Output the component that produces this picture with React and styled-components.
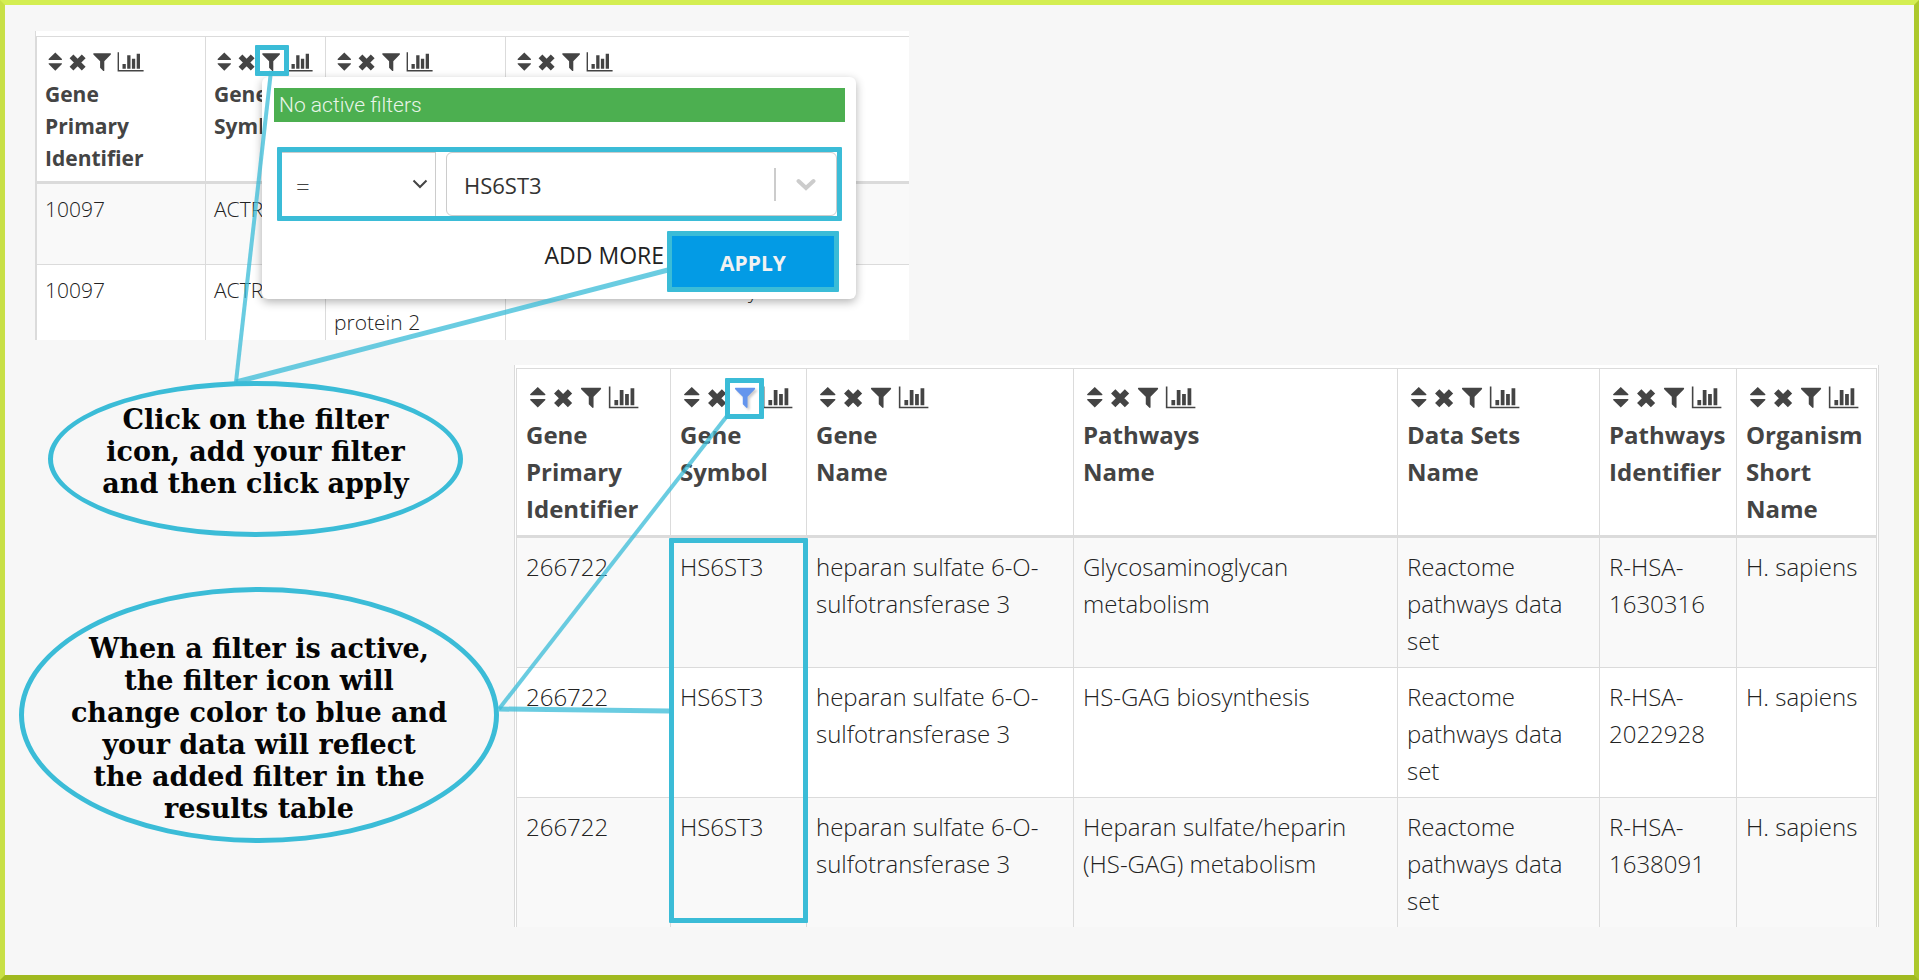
import React from "react";
import styled, { createGlobalStyle, css } from "styled-components";

const CYAN = "#3bbcd7";
const LINE = "#dbdbdb";

const GlobalStyle = createGlobalStyle`
  * { box-sizing: border-box; }
  body {
    margin: 0;
    background: #f7f7f7;
    font-family: "Open Sans", "Noto Sans", sans-serif;
    color: #222;
  }
`;

const Frame = styled.main`
  position: relative;
  min-height: 100vh;
  border: 5px solid;
  border-color: #d4ee52 #acc82c #a0b91f #c8e046;
  padding: 26px 35px 48px 14px;
`;

const Panel = styled.section`
  position: relative;
  background: #fff;
  border-left: 1px solid ${LINE};
`;

const EditorPanel = styled(Panel)`
  max-width: 874px;
  height: 309px;
  margin-left: 16px;
  padding-top: 5px;
  overflow: hidden;
`;

const ResultPanel = styled(Panel)`
  flex: 1;
  border-right: 1px solid ${LINE};
  padding: 3px 1px 0;
`;

const LowerRow = styled.div`
  display: flex;
  align-items: flex-start;
  gap: 15px;
  margin-top: 25px;
`;

const Notes = styled.div`
  flex: none;
  display: flex;
  flex-direction: column;
  width: 480px;
  padding-top: 16px;
  gap: 50px;
`;

const Note = styled.p`
  margin: 0;
  border: 5px solid ${CYAN};
  border-radius: 50%;
  text-align: center;
  color: #050505;
  font: bold 27px/32px "DejaVu Serif", serif;
  ${(p) =>
    p.$large
      ? css`height: 256px; padding-top: 41px;`
      : css`width: 415px; height: 156px; margin-left: 29px; padding-top: 18px;`}
`;

const Table = styled.table`
  width: 100%;
  table-layout: fixed;
  border-collapse: separate;
  border-spacing: 0;
  border-left: 1px solid ${LINE};
  border-top: 1px solid ${LINE};
  font-size: ${(p) => (p.$large ? 24 : 21)}px;
  line-height: ${(p) => (p.$large ? 37 : 32)}px;

  th,
  td {
    border-right: 1px solid ${LINE};
    text-align: left;
    vertical-align: top;
  }
  th {
    padding: ${(p) => (p.$large ? "9px 9px 8px" : "8px 8px 7px")};
  }
  td {
    padding: ${(p) => (p.$large ? "10px 9px 8px" : "9px 8px 7px")};
  }
  ${(p) =>
    !p.$large &&
    css`
      th:last-child,
      td:last-child { border-right: 0; }
    `}
`;

const Col = styled.col`
  width: ${(p) => (p.$w ? p.$w + "px" : "auto")};
`;

const HeadCell = styled.th`
  border-bottom: 3px solid ${LINE};
  color: #444;
  font-weight: 700;
`;

const HeadLine = styled.span`
  display: block;
`;

const Row = styled.tr`
  background: ${(p) => (p.$striped ? "#f9f9f9" : "#fff")};
`;

const Cell = styled.td`
  font-weight: 300;
  border-bottom: ${(p) => (p.$last ? 0 : 1)}px solid ${LINE};
`;

const Tools = styled.span`
  display: flex;
  height: ${(p) => (p.$large ? 37 : 32)}px;
  margin-bottom: 1px;
`;

const Tool = styled.button`
  position: relative;
  flex: none;
  display: flex;
  align-items: center;
  padding: 0;
  border: 0;
  background: none;
  color: ${(p) => (p.$active ? "#6495ed" : "#444")};

  svg {
    display: block;
    width: ${(p) => p.$w}px;
    height: ${(p) => (p.$large ? 25 : 22)}px;
    fill: currentColor;
    filter: ${(p) => (p.$active ? "drop-shadow(2px 2px 1px rgba(0,0,0,.2))" : "none")};
  }

  ${(p) =>
    p.$ringed &&
    css`
      z-index: 1;
      &::after {
        content: "";
        position: absolute;
        inset: ${p.$large ? "0 -3px -4px -5px" : "0 -4px 1px -3px"};
        border: 5px solid ${CYAN};
        border-radius: 1px;
      }
    `}
`;

const ColumnRing = styled.div`
  position: absolute;
  left: 154px;
  top: 173px;
  width: 139px;
  height: 385px;
  border: 5px solid ${CYAN};
  border-radius: 1px;
  pointer-events: none;
`;

const Popup = styled.form`
  position: absolute;
  left: 226px;
  top: 46px;
  width: 594px;
  padding: 11px 11px 7px 12px;
  border-radius: 6px;
  background: #fff;
  box-shadow: 0 3px 10px rgba(0, 0, 0, 0.3);
`;

const Status = styled.p`
  margin: 0 0 25px;
  padding-left: 5px;
  background: #4caf50;
  color: #e9f5e9;
  font: 300 21px/34px Roboto, sans-serif;
`;

const FilterBox = styled.div`
  display: flex;
  gap: 10px;
  height: 74px;
  margin: 0 3px;
  border: 5px solid ${CYAN};
  border-radius: 1px;
`;

const Operator = styled.label`
  position: relative;
  width: 154px;
  border-top: 1px solid #ccc;
  border-right: 1px solid #ccc;

  select {
    appearance: none;
    width: 100%;
    height: 100%;
    padding: 4px 0 0 14px;
    border: 0;
    background: transparent;
    color: #444;
    font: 300 24px "Open Sans", sans-serif;
  }
  svg {
    position: absolute;
    right: 7px;
    top: 26px;
    pointer-events: none;
  }
`;

const ValueField = styled.label`
  flex: 1;
  display: flex;
  align-items: center;
  border: 1px solid #ccc;
  border-radius: 6px;

  input {
    flex: 1;
    min-width: 0;
    padding: 2px 0 0 17px;
    border: 0;
    outline: 0;
    background: transparent;
    color: #333;
    font: 400 22px "Open Sans", sans-serif;
  }
  svg {
    margin: 0 20px;
  }
`;

const Divider = styled.span`
  width: 2px;
  height: 33px;
  background: #ccc;
`;

const Actions = styled.div`
  display: flex;
  justify-content: flex-end;
  margin: 10px 6px 0 0;
`;

const AddMore = styled.button`
  height: 48px;
  padding: 0 3px;
  border: 0;
  background: none;
  color: #222;
  font: 400 23px "Open Sans", sans-serif;
`;

const Apply = styled.button`
  width: 172px;
  height: 61px;
  border: 5px solid ${CYAN};
  border-radius: 1px;
  padding: 2px 0 0;
  background: #039be5;
  color: #f2f2f2;
  font: 700 21px "Open Sans", sans-serif;
`;

const Connectors = styled.svg`
  position: absolute;
  left: 0;
  top: 0;
  width: 800px;
  height: 800px;
  pointer-events: none;
  stroke: ${CYAN};
  stroke-opacity: 0.76;
`;

const ICONS = [
  {
    label: "Sort column",
    w: 21,
    wl: 24,
    art: (
      <path d="M10.3 2.6L17 9Q17.3 9.9 16.4 9.9H4.2Q3.3 9.9 3.6 9ZM3.6 14Q3.3 13.2 4.2 13.2H16.4Q17.3 13.2 17 14L10.3 20.7Z" />
    ),
  },
  {
    label: "Remove column",
    w: 23,
    wl: 26,
    art: (
      <path
        d="M5.5 6.4L17.7 18.6M17.7 6.4L5.5 18.6"
        stroke="currentColor"
        strokeWidth="5.4"
      />
    ),
  },
  {
    label: "Filter column",
    w: 27,
    wl: 31,
    art: (
      <path d="M4.6 3.3H21.6Q22.5 3.8 21.6 4.8L15.3 11.2V20.4Q15.1 21.3 14.3 20.9L11.1 17.8V11.2L4.6 4.8Q3.7 3.8 4.6 3.3Z" />
    ),
  },
  {
    label: "Column summary",
    w: 29,
    wl: 33,
    art: (
      <path d="M1.6 2.2H3V20H27.6V21.4H1.6ZM6.5 14H9.8V18.7H6.5ZM11.2 5.3H14.5V18.7H11.2ZM15.9 8.8H19.2V18.7H15.9ZM20.7 3.7H24V18.7H20.7Z" />
    ),
  },
];

function ColumnTools({ large, ringed, column }) {
  return (
    <Tools $large={large}>
      {ICONS.map((icon, i) => {
        const marked = ringed && i === 2;
        return (
          <Tool
            key={icon.label}
            type="button"
            aria-label={`${icon.label}: ${column}`}
            $large={large}
            $w={large ? icon.wl : icon.w}
            $ringed={marked}
            $active={marked && large}
          >
            <svg viewBox={`0 0 ${icon.w} 22`} aria-hidden="true">
              {icon.art}
            </svg>
          </Tool>
        );
      })}
    </Tools>
  );
}

function DataTable({ columns, rows, large }) {
  return (
    <Table $large={large}>
      <colgroup>
        {columns.map((c) => (
          <Col key={c.title.join(" ")} $w={c.width} />
        ))}
      </colgroup>
      <thead>
        <tr>
          {columns.map((c, i) => (
            <HeadCell key={c.title.join(" ")} scope="col">
              <ColumnTools large={large} ringed={i === 1} column={c.title.join(" ")} />
              {c.title.map((line) => (
                <HeadLine key={line}>{line}</HeadLine>
              ))}
            </HeadCell>
          ))}
        </tr>
      </thead>
      <tbody>
        {rows.map((r, i) => (
          <Row key={i} $striped={i % 2 === 0}>
            {r.map((text, j) => (
              <Cell key={j} $last={i === rows.length - 1}>
                {text}
              </Cell>
            ))}
          </Row>
        ))}
      </tbody>
    </Table>
  );
}

const editorColumns = [
  { title: ["Gene", "Primary", "Identifier"], width: 169 },
  { title: ["Gene", "Symbol"], width: 120 },
  { title: ["Gene", "Name"], width: 180 },
  { title: ["Pathways", "Name"] },
];

const editorRows = [
  ["10097", "ACTR2", "actin related protein 2", "Clathrin-mediated endocytosis"],
  ["10097", "ACTR2", "actin related protein 2", "Clathrin-mediated endocytosis"],
];

const resultColumns = [
  { title: ["Gene", "Primary", "Identifier"], width: 154 },
  { title: ["Gene", "Symbol"], width: 136 },
  { title: ["Gene", "Name"], width: 267 },
  { title: ["Pathways", "Name"] },
  { title: ["Data Sets", "Name"], width: 202 },
  { title: ["Pathways", "Identifier"], width: 137 },
  { title: ["Organism", "Short", "Name"], width: 140 },
];

const resultRows = [
  ["Glycosaminoglycan metabolism", "R-HSA-1630316"],
  ["HS-GAG biosynthesis", "R-HSA-2022928"],
  ["Heparan sulfate/heparin (HS-GAG) metabolism", "R-HSA-1638091"],
].map(([pathway, id]) => [
  "266722",
  "HS6ST3",
  "heparan sulfate 6-O-sulfotransferase 3",
  pathway,
  "Reactome pathways data set",
  id,
  "H. sapiens",
]);

export default function App() {
  return (
    <>
      <GlobalStyle />
      <Frame>
        <EditorPanel>
          <DataTable columns={editorColumns} rows={editorRows} />
          <Popup onSubmit={(e) => e.preventDefault()}>
            <Status>No active filters</Status>
            <FilterBox>
              <Operator>
                <select aria-label="Operator" defaultValue="=">
                  <option>=</option>
                </select>
                <svg width="16" height="10" fill="none" stroke="#444" strokeWidth="2">
                  <path d="M1.5 1.5L8 8L14.5 1.5" />
                </svg>
              </Operator>
              <ValueField>
                <input aria-label="Value" defaultValue="HS6ST3" />
                <Divider />
                <svg
                  width="20"
                  height="14"
                  fill="none"
                  stroke="#ccc"
                  strokeWidth="4"
                  strokeLinecap="round"
                >
                  <path d="M2.5 4L10 11L17.5 4" />
                </svg>
              </ValueField>
            </FilterBox>
            <Actions>
              <AddMore type="button">ADD MORE</AddMore>
              <Apply type="submit">APPLY</Apply>
            </Actions>
          </Popup>
        </EditorPanel>

        <LowerRow>
          <Notes>
            <Note>
              Click on the filter
              <br />
              icon, add your filter
              <br />
              and then click apply
            </Note>
            <Note $large>
              When a filter is active,
              <br />
              the filter icon will
              <br />
              change color to blue and
              <br />
              your data will reflect
              <br />
              the added filter in the
              <br />
              results table
            </Note>
          </Notes>
          <ResultPanel>
            <DataTable large columns={resultColumns} rows={resultRows} />
            <ColumnRing />
          </ResultPanel>
        </LowerRow>

        <Connectors aria-hidden="true">
          <path d="M266 66L231 377" strokeWidth="4" />
          <path d="M663 265L231 377" strokeWidth="5" />
          <path d="M722 411L494 704" strokeWidth="4" />
          <path d="M494 704L664 706" strokeWidth="5" />
        </Connectors>
      </Frame>
    </>
  );
}
